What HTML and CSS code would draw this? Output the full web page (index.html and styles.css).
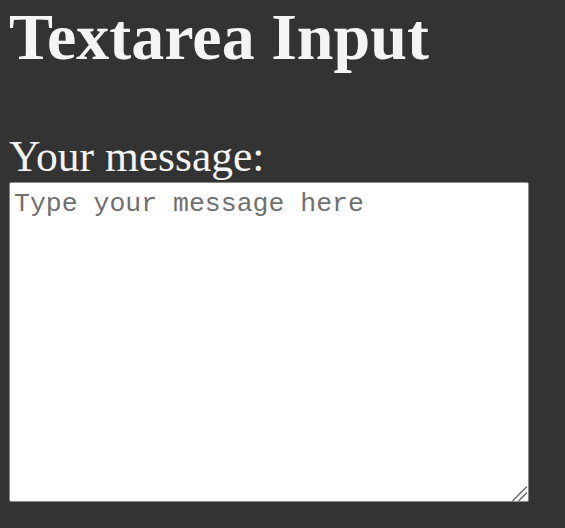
FILE: index.html
```html
<!DOCTYPE html>
<html lang="en">
<head>
<meta charset="utf-8">
<title>Textarea Input</title>
<link rel="stylesheet" href="styles.css">
</head>
<body>
<main class="page">
  <h1 class="title">Textarea Input</h1>
  <label class="label" for="msg">Your message:</label>
  <div class="field">
    <textarea class="box" id="msg" placeholder="Type your message here"></textarea>
    <svg class="grip" width="22" height="22" viewBox="0 0 22 22" aria-hidden="true">
      <line x1="6" y1="20.5" x2="19.5" y2="7" stroke="#6e6e6e" stroke-width="1.6" stroke-linecap="round"/>
      <line x1="12" y1="20.5" x2="19.5" y2="13" stroke="#6e6e6e" stroke-width="1.6" stroke-linecap="round"/>
    </svg>
  </div>
</main>
</body>
</html>
```

FILE: styles.css
```css
html, body {
  margin: 0;
  padding: 0;
  background: #333333;
}
.page {
  display: flex;
  flex-direction: column;
  align-items: flex-start;
  padding: 0 9px;
  font-family: "Liberation Serif", "Times New Roman", serif;
  color: #f4f4f4;
}
.title {
  margin: -1px 0 0 0;
  font-size: 66px;
  font-weight: bold;
  line-height: normal;
}
.label {
  display: block;
  margin-top: 56px;
  font-size: 43.5px;
  line-height: normal;
}
.field {
  position: relative;
  margin-top: 1px;
  width: 520px;
  height: 320px;
}
.box {
  display: block;
  box-sizing: border-box;
  width: 520px;
  height: 320px;
  margin: 0;
  padding: 6px 4px;
  border: 1px solid #8a8a8a;
  border-radius: 2px;
  background: #ffffff;
  font-family: "Liberation Mono", "Courier New", monospace;
  font-size: 26.5px;
  line-height: normal;
  color: #222;
  resize: none;
}
.box::placeholder {
  color: #707070;
}
.grip {
  position: absolute;
  right: 0;
  bottom: 0;
  pointer-events: none;
}
```
